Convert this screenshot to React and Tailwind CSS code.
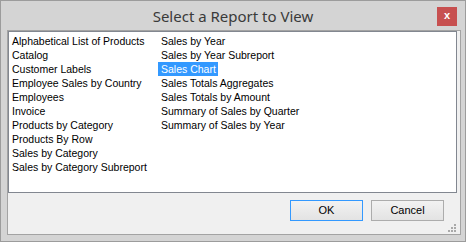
import React from 'react';

const leftItems = [
  'Alphabetical List of Products',
  'Catalog',
  'Customer Labels',
  'Employee Sales by Country',
  'Employees',
  'Invoice',
  'Products by Category',
  'Products By Row',
  'Sales by Category',
  'Sales by Category Subreport',
];

const rightItems = [
  'Sales by Year',
  'Sales by Year Subreport',
  'Sales Chart',
  'Sales Totals Aggregates',
  'Sales Totals by Amount',
  'Summary of Sales by Quarter',
  'Summary of Sales by Year',
];

const ListColumn = ({ items, selected }) => (
  <div className="flex flex-col w-[149px] shrink-0">
    {items.map((item) => (
      <div key={item} className="h-[14px] leading-[14px] whitespace-nowrap">
        <span
          className={
            item === selected
              ? 'inline-block h-[14px] pl-[3px] pr-[2px] bg-[#3399ff] text-white'
              : 'inline-block h-[14px] pl-[3px] pr-[2px] text-black'
          }
        >
          {item}
        </span>
      </div>
    ))}
  </div>
);

const Grip = () => (
  <svg className="absolute right-[3px] bottom-[1px]" width="9" height="9" viewBox="0 0 9 9">
    <g fill="#a9a9a9">
      <rect x="6" y="0" width="2" height="2" />
      <rect x="3" y="3" width="2" height="2" />
      <rect x="6" y="3" width="2" height="2" />
      <rect x="0" y="6" width="2" height="2" />
      <rect x="3" y="6" width="2" height="2" />
      <rect x="6" y="6" width="2" height="2" />
    </g>
  </svg>
);

export default function App() {
  return (
    <div className="w-[466px] h-[242px] bg-[#d4d4d4] border border-[#9c9c9c] flex flex-col font-['Liberation_Sans',Arial,sans-serif] text-[10.5px]">
      {/* title bar */}
      <div className="h-[29px] shrink-0 grid grid-cols-[1fr_auto_1fr] items-center">
        <div />
        <div className="font-['Noto_Sans',sans-serif] text-[15px] text-[#3a3a3a] leading-none pt-[1px]">
          Select a Report to View
        </div>
        <div className="flex justify-end pr-[8px]">
          <div className="w-[20px] h-[19px] mt-[2px] bg-[#c75050] flex items-center justify-center text-white font-bold text-[11px] leading-none pb-[2px]">
            x
          </div>
        </div>
      </div>

      {/* client area */}
      <div className="relative flex-1 ml-[6px] mr-[4px] mb-[6px] border border-[#a3a3a3] bg-[#f0f0f0] flex flex-col">
        <div className="h-[162px] w-[449px] bg-white border border-[#828790] flex pt-[2px]">
          <ListColumn items={leftItems} />
          <ListColumn items={rightItems} selected="Sales Chart" />
        </div>

        <div className="flex justify-end gap-[8px] pt-[7px] pr-[16px]">
          <button className="w-[73px] h-[21px] border border-[#3399ff] bg-gradient-to-b from-[#f2f2f2] to-[#e3e3e3] text-black text-[11px] leading-none">
            OK
          </button>
          <button className="w-[73px] h-[21px] border border-[#acacac] bg-gradient-to-b from-[#f2f2f2] to-[#e3e3e3] text-black text-[11px] leading-none">
            Cancel
          </button>
        </div>

        <Grip />
      </div>
    </div>
  );
}
